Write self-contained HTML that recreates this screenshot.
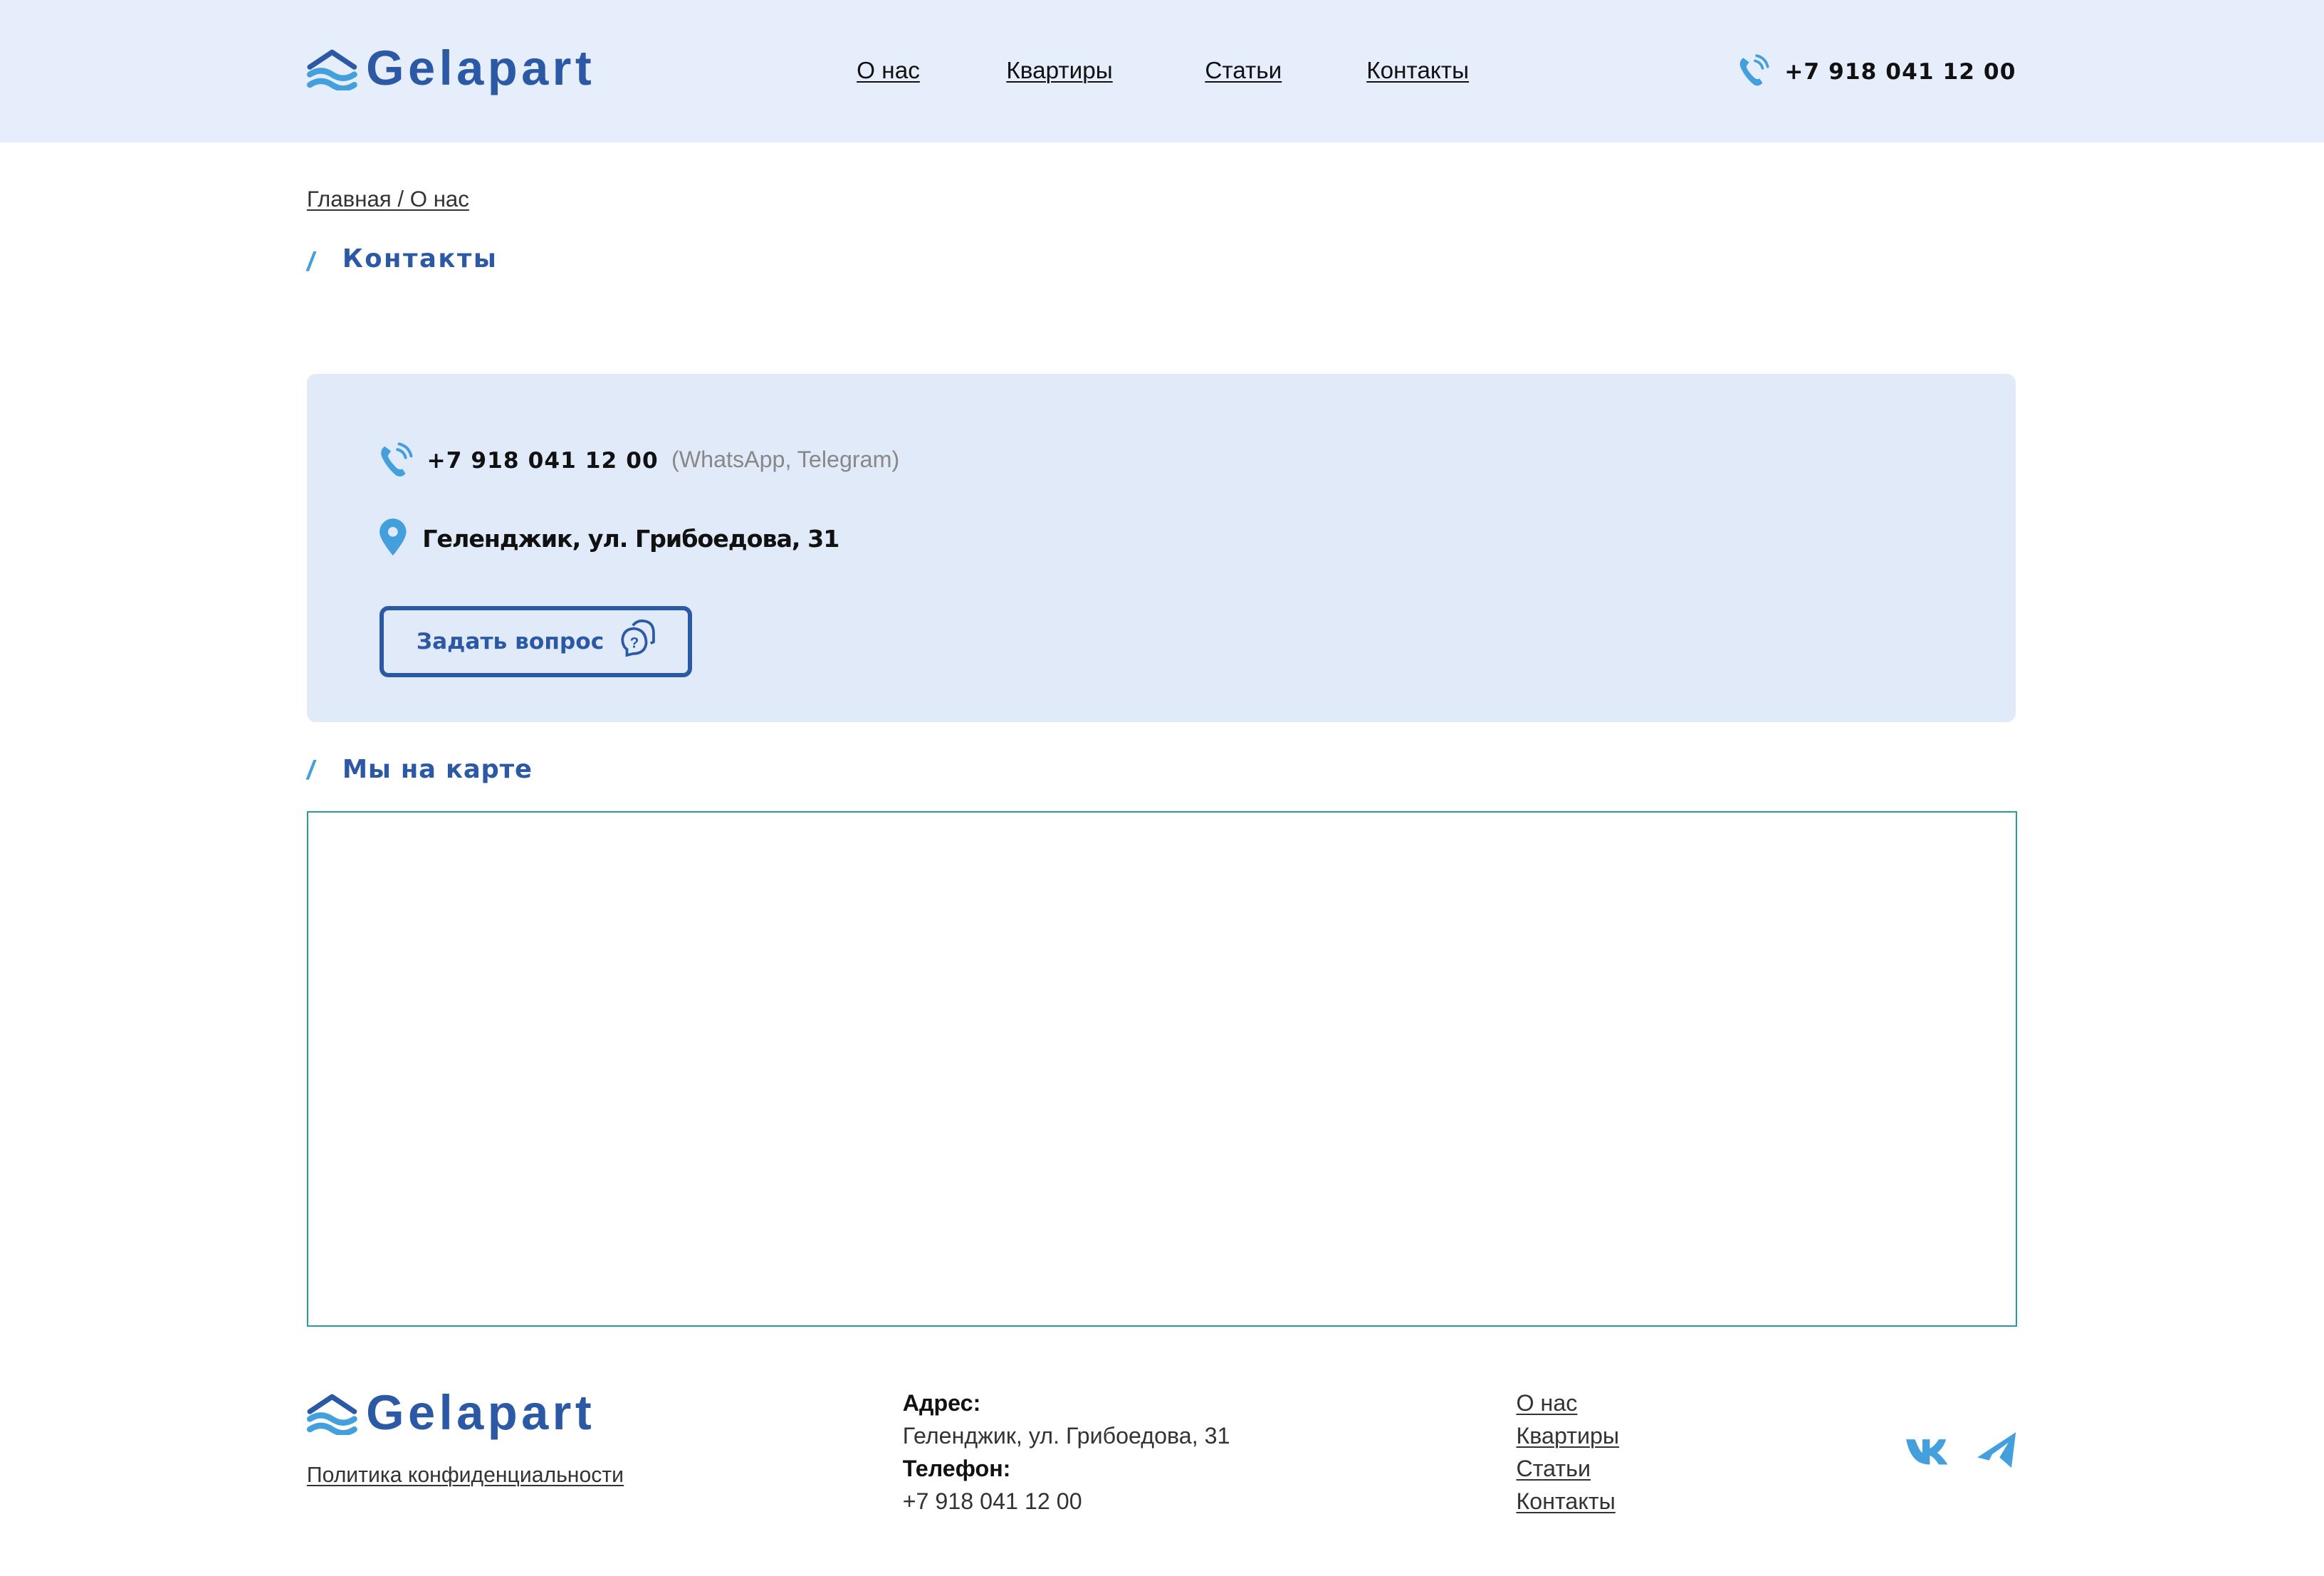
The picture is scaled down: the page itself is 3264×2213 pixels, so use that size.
<!DOCTYPE html>
<html><head><meta charset="utf-8"><style>
html,body{margin:0;padding:0;background:#fff;}
#w{width:1568px;height:1063px;position:relative;zoom:2.0816;font-family:"Liberation Sans","Noto Sans CJK SC",sans-serif;color:#111;overflow:hidden}
.a{position:absolute;white-space:nowrap}
a{color:#111;text-decoration:underline;text-underline-offset:2px;text-decoration-thickness:1px}
.b{font-weight:bold}
.d{font-family:"DejaVu Sans",sans-serif;font-weight:bold}
.blue{color:#2c59a5}
</style></head><body><div id="w">
<div class="a" style="left:0;top:0;width:1568px;height:96px;background:#e6eefb"></div>
<svg class="a" style="left:207px;top:31px" width="34" height="30" viewBox="0 0 34 30"><path d="M2 14 L17 4 L32 14" fill="none" stroke="#2c59a5" stroke-width="3.5" stroke-linecap="round" stroke-linejoin="round"/><path d="M2 19 Q9.5 14 17 19 T32 19" fill="none" stroke="#44a0dc" stroke-width="4" stroke-linecap="round"/><path d="M2 26 Q9.5 21 17 26 T32 26" fill="none" stroke="#44a0dc" stroke-width="4" stroke-linecap="round"/></svg>
<div class="a b blue" style="left:247px;top:27px;font-size:33px;letter-spacing:2.6px">Gelapart</div>
<div class="a" style="left:578px;top:39px;font-size:16px"><a>О нас</a></div>
<div class="a" style="left:679px;top:39px;font-size:16px"><a>Квартиры</a></div>
<div class="a" style="left:813px;top:39px;font-size:16px"><a>Статьи</a></div>
<div class="a" style="left:922px;top:39px;font-size:16px"><a>Контакты</a></div>
<svg class="a" style="left:1171px;top:36px" width="24" height="24" viewBox="0 0 24 24"><path d="M5 3 Q2 5 3 9 Q6 16 12 21 Q15 23 18 20 L16 17 Q14 18 12 16 Q8 12 7 9 Q8 7 9 6 Z" fill="#44a0dc"/><path d="M13 5 Q17 6 18 10 M14 1.5 Q20 3 21.5 9" fill="none" stroke="#44a0dc" stroke-width="1.8" stroke-linecap="round"/></svg>
<div class="a d" style="left:1204px;top:40px;font-size:15px;letter-spacing:0.5px">+7 918 041 12 00</div>

<div class="a" style="left:207px;top:126px;font-size:15px;color:#333"><a style="color:#333">Главная / О нас</a></div>
<div class="a b" style="left:207px;top:166px;font-size:18px;color:#44a0dc;font-style:italic">/</div>
<div class="a d blue" style="left:231px;top:165px;font-size:17px;letter-spacing:1.2px">Контакты</div>

<div class="a" style="left:207px;top:252px;width:1153px;height:235px;background:#e1eaf8;border-radius:6px"></div>
<svg class="a" style="left:254px;top:298px" width="26" height="26" viewBox="0 0 24 24"><path d="M5 3 Q2 5 3 9 Q6 16 12 21 Q15 23 18 20 L16 17 Q14 18 12 16 Q8 12 7 9 Q8 7 9 6 Z" fill="#44a0dc"/><path d="M13 5 Q17 6 18 10 M14 1.5 Q20 3 21.5 9" fill="none" stroke="#44a0dc" stroke-width="1.8" stroke-linecap="round"/></svg>
<div class="a d" style="left:288px;top:302px;font-size:15px;letter-spacing:0.5px">+7 918 041 12 00</div>
<div class="a" style="left:453px;top:301px;font-size:15.5px;color:#888">(WhatsApp, Telegram)</div>
<svg class="a" style="left:255px;top:349px" width="20" height="27" viewBox="0 0 20 27"><path d="M10 1 A9 9 0 0 1 19 10 Q19 15 10 26 Q1 15 1 10 A9 9 0 0 1 10 1Z" fill="#44a0dc"/><circle cx="10" cy="10" r="3.3" fill="#e1eaf8"/></svg>
<div class="a d" style="left:285px;top:354px;font-size:16px;letter-spacing:-0.5px">Геленджик, ул. Грибоедова, 31</div>
<div class="a" style="left:256px;top:409px;width:205px;height:42px;border:3px solid #2c59a5;border-radius:6px"></div>
<div class="a d blue" style="left:281px;top:424px;font-size:15px;letter-spacing:0px">Задать вопрос</div>
<svg class="a" style="left:417px;top:417px" width="28" height="28" viewBox="0 0 28 28"><path d="M10 5 Q13 1 18 2 Q24 3 24 10 L24 16 L22 17" fill="none" stroke="#2c59a5" stroke-width="1.8"/><path d="M11 7 Q4 7 3 14 Q3 19 6 21 L6 25 L10 24 Q18 24 19 17 Q19 8 11 7Z" fill="none" stroke="#2c59a5" stroke-width="1.8"/><text x="8" y="20" font-size="10" font-weight="bold" fill="#2c59a5" font-family="Liberation Sans">?</text></svg>

<div class="a b" style="left:207px;top:509px;font-size:18px;color:#44a0dc;font-style:italic">/</div>
<div class="a d blue" style="left:231px;top:509px;font-size:17px;letter-spacing:0.4px">Мы на карте</div>
<div class="a" style="left:207px;top:547px;width:1152px;height:346px;border:1px solid #2a9aa0"></div>

<svg class="a" style="left:207px;top:938px" width="34" height="30" viewBox="0 0 34 30"><path d="M2 14 L17 4 L32 14" fill="none" stroke="#2c59a5" stroke-width="3.5" stroke-linecap="round" stroke-linejoin="round"/><path d="M2 19 Q9.5 14 17 19 T32 19" fill="none" stroke="#44a0dc" stroke-width="4" stroke-linecap="round"/><path d="M2 26 Q9.5 21 17 26 T32 26" fill="none" stroke="#44a0dc" stroke-width="4" stroke-linecap="round"/></svg>
<div class="a b blue" style="left:247px;top:934px;font-size:33px;letter-spacing:2.6px">Gelapart</div>
<div class="a" style="left:207px;top:987px;font-size:14.5px;color:#333"><a style="color:#333">Политика конфиденциальности</a></div>
<div class="a" style="left:609px;top:936px;font-size:15.5px;line-height:22px;color:#333"><span class="b" style="color:#111">Адрес:</span><br>Геленджик, ул. Грибоедова, 31<br><span class="b" style="color:#111">Телефон:</span><br>+7 918 041 12 00</div>
<div class="a" style="left:1023px;top:936px;font-size:15.5px;line-height:22px;color:#333"><a style="color:#333">О нас</a><br><a style="color:#333">Квартиры</a><br><a style="color:#333">Статьи</a><br><a style="color:#333">Контакты</a></div>
<svg class="a" style="left:1285px;top:969px" width="32" height="20" viewBox="0 0 32 20"><path d="M1 2 L7 2 Q10 10 12 11 L12 2 L17 2 L17 8 Q20 7 23 2 L28 2 Q26 8 22 11 Q26 14 29 19 L23 19 Q20 14 17 13 L17 19 Q8 19 4 11 Q2 7 1 2Z" fill="#44a0dc"/></svg>
<svg class="a" style="left:1333px;top:965px" width="28" height="26" viewBox="0 0 28 26"><path d="M1 18 L27 1 L24 25 L16 18 L22 8 L11 16 Z M1 18 L9 20 L11 16Z" fill="#44a0dc"/></svg>
</div></body></html>
